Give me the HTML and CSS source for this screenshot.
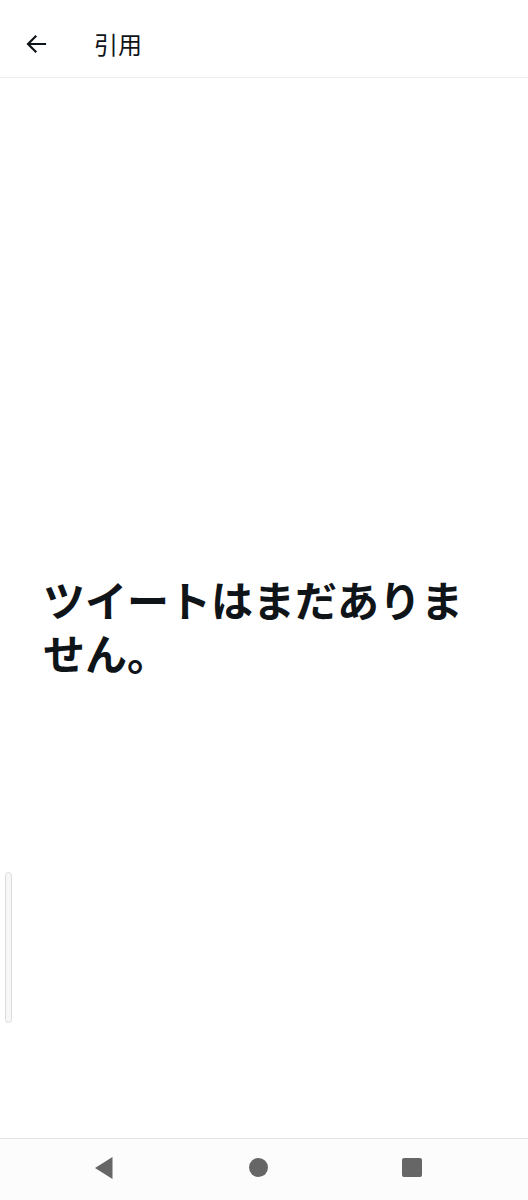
FILE: index.html
```html
<!DOCTYPE html>
<html lang="ja">
<head>
<meta charset="utf-8">
<title>引用</title>
<link rel="stylesheet" href="styles.css">
</head>
<body>
<div class="app">
  <header class="topbar">
    <span class="back" aria-label="戻る">
      <svg width="24" height="24" viewBox="0 0 24 24"><path d="M21 12H4.5M11.5 4.5L4 12 11.5 19.5" fill="none" stroke="#0f1419" stroke-width="2.2" stroke-linecap="square"/></svg>
    </span>
    <h1 class="title">引用</h1>
  </header>
  <main class="content">
    <p class="empty">ツイートはまだありません。</p>
    <div class="scrollbar"></div>
  </main>
  <nav class="navbar">
    <span class="nav-btn"><svg width="20" height="24" viewBox="0 0 20 24"><path d="M18.5 1V23L1 12Z" fill="#666"/></svg></span>
    <span class="nav-btn"><span class="home"></span></span>
    <span class="nav-btn"><span class="recent"></span></span>
  </nav>
</div>
</body>
</html>
```

FILE: styles.css
```css
html, body {
  margin: 0;
  padding: 0;
  background: #ffffff;
}
.app {
  width: 528px;
  height: 1200px;
  display: flex;
  flex-direction: column;
  font-family: "Noto Sans CJK JP", "Noto Sans", sans-serif;
  color: #0f1419;
}
.topbar {
  height: 67px;
  padding: 10px 0 0 24px;
  border-bottom: 1px solid #ebeef0;
  display: flex;
  align-items: center;
}
.back {
  width: 24px;
  height: 24px;
  display: flex;
}
.title {
  margin: 0 0 0 46px;
  font-size: 24px;
  font-weight: 400;
  line-height: 30px;
}
.content {
  flex: 1;
  position: relative;
  padding: 494px 43px 0 43px;
}
.empty {
  margin: 0;
  font-size: 42px;
  font-weight: 700;
  line-height: 53px;
  max-width: 440px;
}
.scrollbar {
  position: absolute;
  left: 5px;
  top: 794px;
  width: 5px;
  height: 149px;
  border: 1px solid #dcdcdc;
  border-radius: 4px;
  background: #f7f7f7;
}
.navbar {
  height: 57px;
  padding: 0 0 4px 27px;
  border-top: 1px solid #e4e4e4;
  background: #fcfcfc;
  display: grid;
  grid-template-columns: 154px 154px 154px;
  align-items: center;
}
.nav-btn {
  display: flex;
  justify-content: center;
  align-items: center;
  height: 24px;
}
.home {
  width: 19px;
  height: 19px;
  border-radius: 50%;
  background: #666;
}
.recent {
  width: 20px;
  height: 19px;
  border-radius: 2px;
  background: #666;
}
```
